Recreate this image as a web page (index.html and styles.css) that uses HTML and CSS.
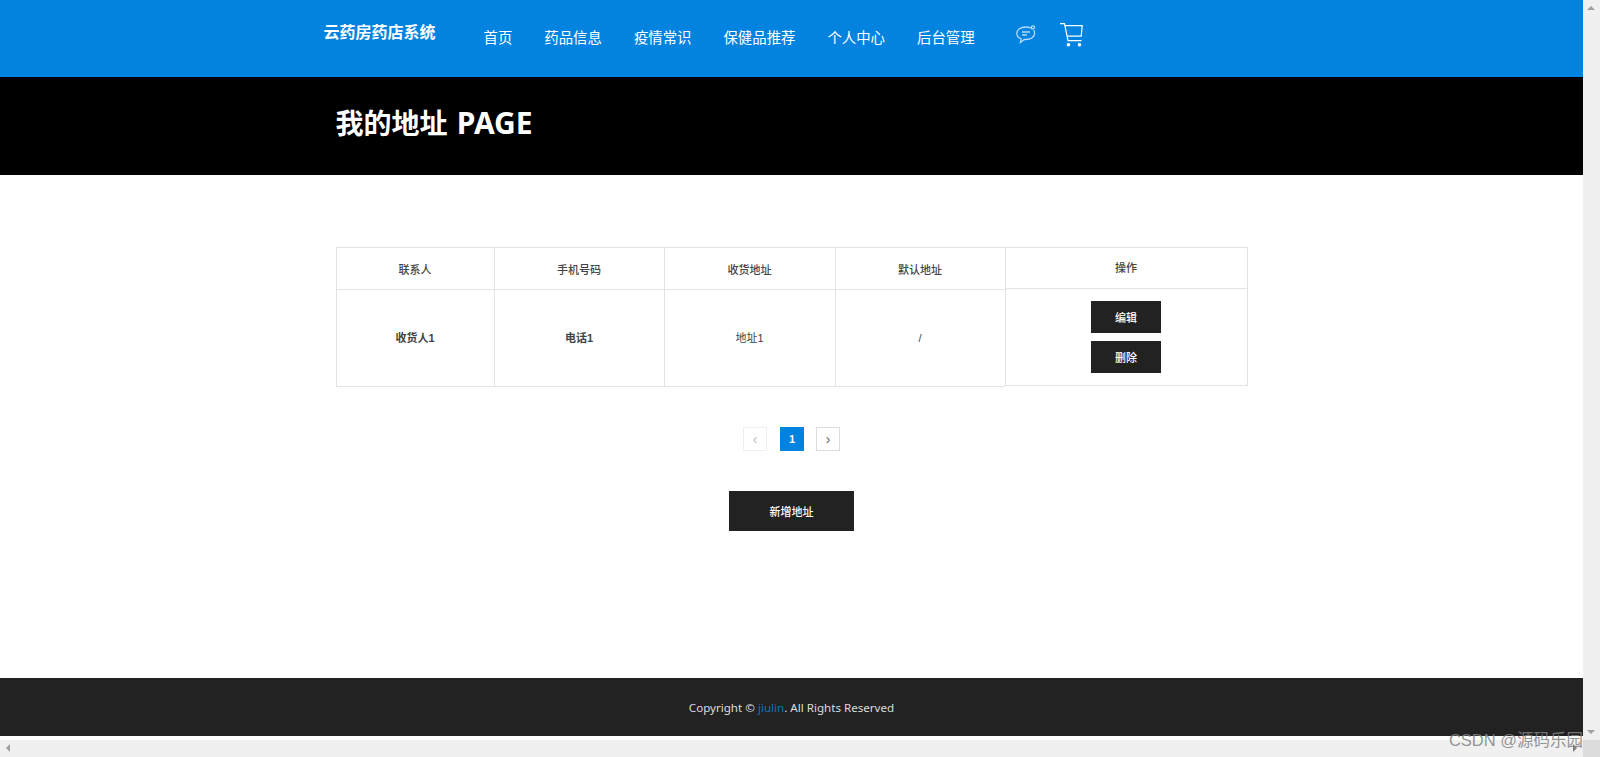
FILE: index.html
```html
<!DOCTYPE html>
<html lang="zh-CN">
<head>
    <meta charset="UTF-8">
    <meta name="viewport" content="width=device-width, initial-scale=1.0">
    <title>我的地址</title>
    <link rel="stylesheet" href="styles.css">
</head>
<body>
    <div class="window">
        <div class="page">
            <header class="topbar">
                <div class="topbar-inner">
                    <a class="brand">云药房药店系统</a>
                    <nav class="nav">
                        <a>首页</a>
                        <a>药品信息</a>
                        <a>疫情常识</a>
                        <a>保健品推荐</a>
                        <a>个人中心</a>
                        <a>后台管理</a>
                    </nav>
                    <svg class="icon-chat" width="20" height="19" viewBox="0 0 20 19" fill="none" stroke="#b5dcf8" stroke-width="1.3">
                        <path d="M15 3.200C13.600 2.300 12 2 10 2 4.500 2 .8 4.600.8 8.200c0 2.700 2 4.600 4.200 5.500l-.6 3.800 3.800-3.100c.6.100 1.200.100 1.800.100 5 0 8.600-2.600 8.600-6.300 0-1-.3-2-.8-2.800"/>
                        <circle cx="17" cy="2.400" r="1.600"/>
                        <path d="M6 7h8M6 10h5"/>
                    </svg>
                    <svg class="icon-cart" width="23" height="24" viewBox="0 0 23 24" fill="none" stroke="#fff" stroke-width="1.200">
                        <path d="M0 .6h4.500l3.500 17h13.500"/>
                        <path d="M4.800 2.600h17.400l-1 10.600H7"/>
                        <circle cx="8.500" cy="21.800" r="1.200" fill="#fff"/>
                        <circle cx="19.500" cy="21.800" r="1.200" fill="#fff"/>
                    </svg>
                </div>
            </header>

            <div class="banner">
                <h1>我的地址 <span>PAGE</span></h1>
            </div>

            <main class="content">
                <div class="addr-table">
                    <div class="col col-name">
                        <div class="head">联系人</div>
                        <div class="cell strong">收货人1</div>
                    </div>
                    <div class="col col-mid">
                        <div class="head">手机号码</div>
                        <div class="cell strong">电话1</div>
                    </div>
                    <div class="col col-addr">
                        <div class="head">收货地址</div>
                        <div class="cell">地址1</div>
                    </div>
                    <div class="col col-mid">
                        <div class="head">默认地址</div>
                        <div class="cell">/</div>
                    </div>
                    <div class="col col-ops">
                        <div class="head">操作</div>
                        <div class="cell ops">
                            <button class="btn">编辑</button>
                            <button class="btn">删除</button>
                        </div>
                    </div>
                </div>

                <div class="pager">
                    <span class="page-btn disabled">&#8249;</span>
                    <span class="page-btn current">1</span>
                    <span class="page-btn">&#8250;</span>
                </div>

                <button class="btn btn-add">新增地址</button>
            </main>

            <footer class="footer">
                <p>Copyright &copy; <a>jiulin</a>. All Rights Reserved</p>
            </footer>
        </div>

        <div class="scroll-v"><i class="arrow-up"></i><i class="arrow-down"></i></div>
        <div class="scroll-h"><i class="arrow-left"></i><i class="arrow-right"></i></div>
        <div class="scroll-corner"></div>

        <div class="watermark">CSDN @源码乐园</div>
    </div>
</body>
</html>
```

FILE: styles.css
```css
html, body {
    margin: 0;
    height: 100%;
    overflow: hidden;
}
body {
    font-family: "Liberation Sans", "Noto Sans CJK SC", sans-serif;
    color: #333;
    background-color: #fff;
}
.window {
    position: relative;
    display: grid;
    grid-template-columns: 1fr 17px;
    grid-template-rows: 1fr 17px;
    height: 757px;
}
.page {
    display: flex;
    flex-direction: column;
    padding-bottom: 4px;
    min-height: 0;
}

/* header */
.topbar {
    height: 77px;
    background-color: #0283e0;
    flex-shrink: 0;
}
.topbar-inner {
    display: flex;
    align-items: flex-start;
    width: 936px;
    margin: 0 auto;
    color: #fff;
}
.brand {
    width: 160px;
    margin-top: 22px;
    font-size: 16px;
    line-height: 22px;
    font-weight: 700;
    white-space: nowrap;
}
.nav {
    display: flex;
    gap: 32px;
    margin-top: 27px;
    font-size: 14.4px;
    line-height: 22px;
}
.icon-chat {
    margin: 25px 0 0 41px;
}
.icon-cart {
    margin: 23px 0 0 24px;
}

/* banner */
.banner {
    height: 98px;
    background-color: #000;
    flex-shrink: 0;
}
.banner h1 {
    width: 912px;
    margin: 0 auto;
    font-family: "Noto Sans", "Noto Sans CJK SC", sans-serif;
    font-size: 28px;
    line-height: 92px;
    font-weight: 700;
    color: #fff;
}
.banner h1 span {
    margin-left: 2px;
    font-size: 30px;
}

/* main */
.content {
    flex: 1;
    display: flex;
    flex-direction: column;
    align-items: center;
    padding-top: 72px;
}
.addr-table {
    display: flex;
    align-items: flex-start;
    width: 912px;
    font-size: 11px;
    color: #444;
    text-align: center;
}
.col {
    box-sizing: border-box;
    border-top: 1px solid #e3e3e3;
    border-left: 1px solid #e3e3e3;
}
.col-name { width: 158px; }
.col-mid { width: 170px; }
.col-addr { width: 171px; }
.col-ops {
    width: 243px;
    border-right: 1px solid #e3e3e3;
}
.head {
    height: 41px;
    line-height: 44px;
    font-weight: 500;
    border-bottom: 1px solid #e3e3e3;
}
.cell {
    height: 96px;
    line-height: 96px;
    border-bottom: 1px solid #e3e3e3;
}
.cell.strong {
    font-weight: 700;
}
.col-ops .head {
    height: 40px;
    line-height: 40px;
}
.ops {
    display: flex;
    flex-direction: column;
    align-items: center;
    justify-content: center;
    gap: 8px;
}
.btn {
    width: 70px;
    height: 32px;
    padding: 0;
    border: none;
    background-color: #222;
    color: #fff;
    font-family: inherit;
    font-size: 11px;
    font-weight: 500;
    cursor: pointer;
}
.btn-add {
    width: 125px;
    height: 40px;
    margin-top: 40px;
}

/* pagination */
.pager {
    display: flex;
    gap: 12px;
    margin-top: 40px;
}
.page-btn {
    box-sizing: border-box;
    width: 24px;
    height: 24px;
    border: 1px solid #ddd;
    font-size: 14px;
    line-height: 23px;
    text-align: center;
    color: #666;
}
.page-btn.disabled {
    margin-right: 1px;
    border-color: #eee;
    color: #bbb;
}
.page-btn.current {
    border-color: #0283e0;
    background-color: #0283e0;
    color: #fff;
    font-weight: 700;
    font-size: 11px;
    line-height: 22px;
}

/* footer */
.footer {
    height: 58px;
    background-color: #222;
    flex-shrink: 0;
    text-align: center;
}
.footer p {
    margin: 0;
    font-family: "Noto Sans", sans-serif;
    font-size: 11.6px;
    line-height: 60px;
    color: #ddd;
}
.footer a {
    color: #0a72c4;
}

/* fake browser scrollbars */
.scroll-v {
    position: relative;
    background-color: #f0f0f0;
}
.scroll-h {
    position: relative;
    background-color: #f0f0f0;
}
.scroll-corner {
    background-color: #dcdcdc;
}
.arrow-up {
    position: absolute;
    left: 4px;
    top: 6px;
    border-left: 4px solid transparent;
    border-right: 4px solid transparent;
    border-bottom: 4px solid #a0a0a0;
}
.arrow-down {
    position: absolute;
    left: 4px;
    bottom: 6px;
    border-left: 4px solid transparent;
    border-right: 4px solid transparent;
    border-top: 4px solid #a0a0a0;
}
.arrow-left {
    position: absolute;
    left: 6px;
    top: 4px;
    border-top: 4px solid transparent;
    border-bottom: 4px solid transparent;
    border-right: 4px solid #a0a0a0;
}
.arrow-right {
    position: absolute;
    right: 6px;
    top: 4px;
    border-top: 4px solid transparent;
    border-bottom: 4px solid transparent;
    border-left: 4px solid #808080;
}
.watermark {
    position: absolute;
    right: 17px;
    bottom: 6px;
    font-family: "Liberation Sans", "Noto Sans CJK SC", sans-serif;
    font-size: 16.5px;
    line-height: 22px;
    color: rgba(130, 130, 130, 0.85);
    white-space: nowrap;
}
```
